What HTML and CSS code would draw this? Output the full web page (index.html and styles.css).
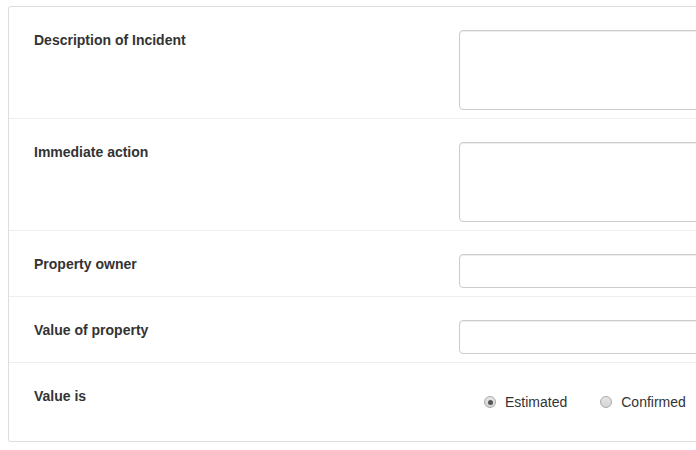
FILE: index.html
```html
<!DOCTYPE html>
<html>
<head>
<meta charset="utf-8">
<link rel="stylesheet" href="styles.css">
</head>
<body>
<div class="card">
  <div class="row">
    <div class="label">Description of Incident</div>
    <div class="field"><textarea class="control area"></textarea></div>
  </div>
  <div class="row">
    <div class="label">Immediate action</div>
    <div class="field"><textarea class="control area"></textarea></div>
  </div>
  <div class="row">
    <div class="label">Property owner</div>
    <div class="field"><input class="control" type="text"></div>
  </div>
  <div class="row">
    <div class="label">Value of property</div>
    <div class="field"><input class="control" type="text"></div>
  </div>
  <div class="row last">
    <div class="label">Value is</div>
    <div class="field radios">
      <label class="opt"><span class="dot checked"></span>Estimated</label>
      <label class="opt"><span class="dot"></span>Confirmed</label>
    </div>
  </div>
</div>
</body>
</html>
```
FILE: styles.css
```css
html, body {
  margin: 0;
  padding: 0;
  overflow: hidden;
  background: #fff;
}
body {
  font-family: "Liberation Sans", Arial, sans-serif;
  font-size: 14px;
  line-height: 20px;
  color: #333;
  padding: 6px 0 0 8px;
}
.card {
  width: 760px;
  border: 1px solid #ddd;
  border-radius: 3px;
  background: #fff;
  box-shadow: 0 1px 1px rgba(0,0,0,0.05);
}
.row {
  display: flex;
  padding: 23px 25px 8px;
  border-top: 1px solid #eee;
}
.row:first-child {
  border-top: none;
}
.row.last {
  padding-bottom: 29px;
}
.label {
  width: 425px;
  flex: none;
  font-weight: bold;
}
.field {
  flex: 1;
}
.control {
  display: block;
  box-sizing: border-box;
  width: 300px;
  height: 34px;
  margin: 0;
  border: 1px solid #ccc;
  border-radius: 4px;
  box-shadow: inset 0 1px 1px rgba(0,0,0,0.075);
  font: inherit;
  background: #fff;
  resize: none;
}
.area {
  height: 80px;
}
.radios {
  display: flex;
  padding: 6px 0 0 25px;
  gap: 33px;
}
.opt {
  display: flex;
  align-items: center;
  gap: 9px;
  font-weight: normal;
}
.dot {
  width: 12px;
  height: 12px;
  box-sizing: border-box;
  border-radius: 50%;
  border: 1px solid #a9a9a9;
  background: linear-gradient(#e6e6e6, #d4d4d4);
  position: relative;
}
.dot.checked::after {
  content: "";
  position: absolute;
  left: 2.5px;
  top: 2.5px;
  width: 5px;
  height: 5px;
  border-radius: 50%;
  background: #555;
}
```
